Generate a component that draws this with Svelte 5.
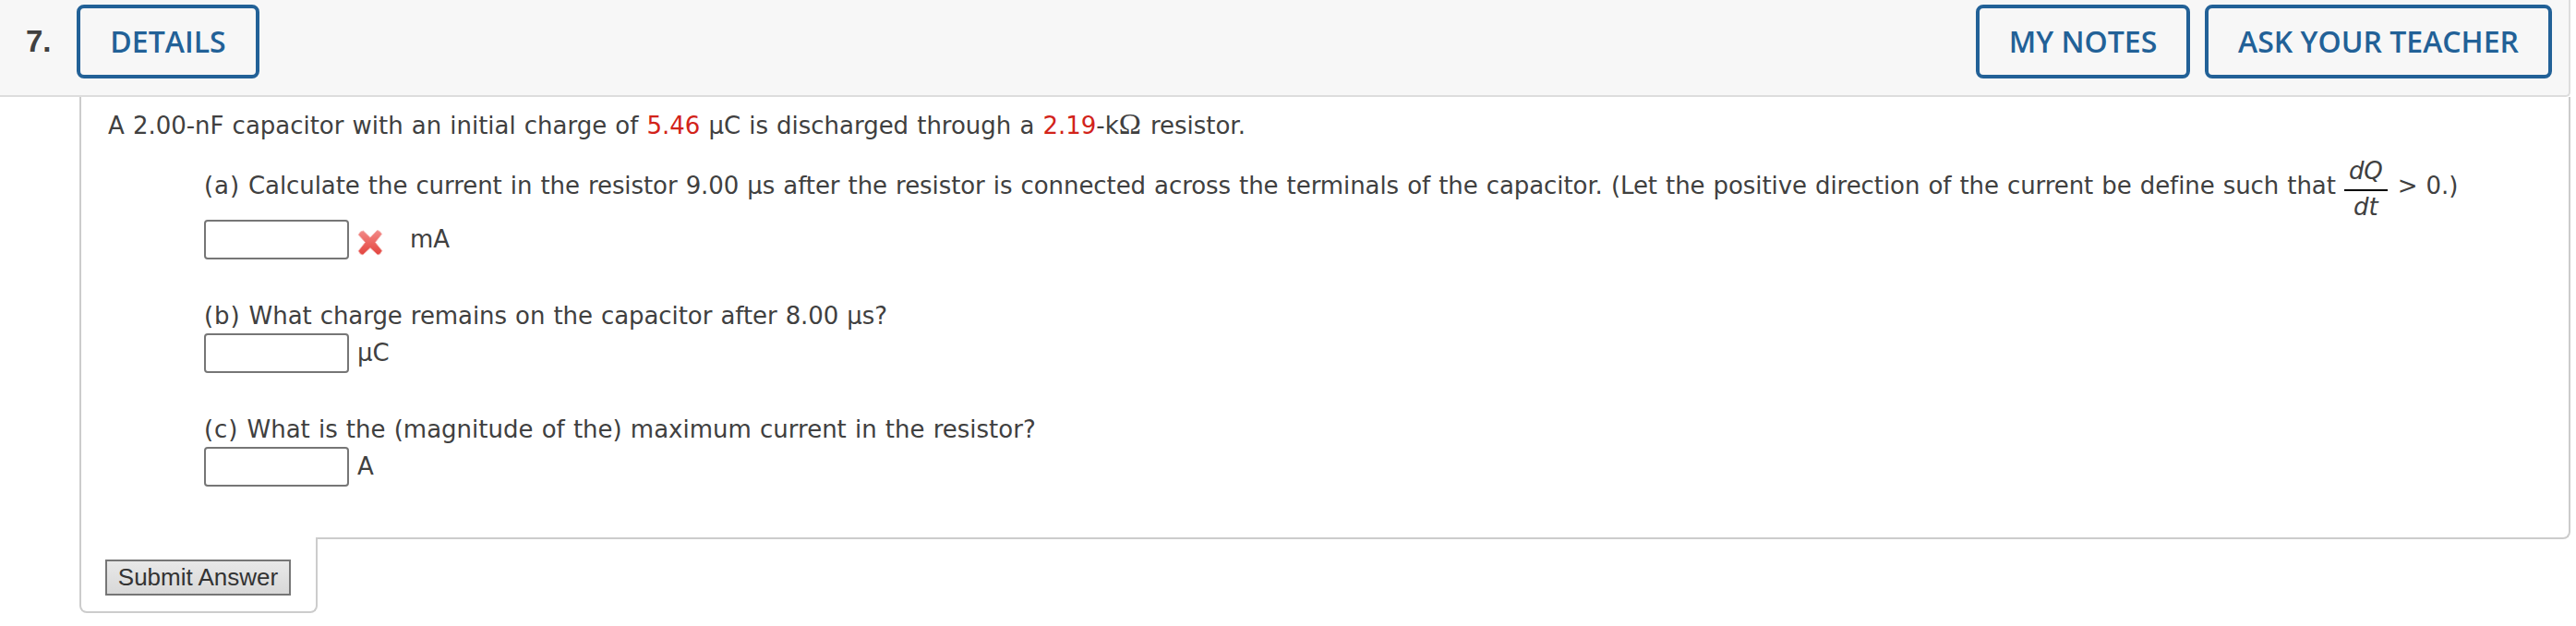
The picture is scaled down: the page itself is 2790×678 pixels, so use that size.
<script>
	let answers = { a: '', b: '', c: '' };
</script>

<div class="question">
	<header>
		<span class="number">7.</span>
		<button class="action">DETAILS</button>
		<div class="right">
			<button class="action notes">MY NOTES</button>
			<button class="action ask">ASK YOUR TEACHER</button>
		</div>
	</header>

	<main>
		<p class="intro">
			A 2.00-nF capacitor with an initial charge of <span class="rand">5.46</span> µC is discharged through a <span class="rand">2.19</span>-k<span class="ohm">Ω</span> resistor.
		</p>

		<div class="part part-a">
			<div class="prompt">
				<span><span class="label">(a)</span> Calculate the current in the resistor 9.00 µs after the resistor is connected across the terminals of the capacitor. (Let the positive direction of the current be define such that</span>
				<span class="frac"><i class="num">dQ</i><i class="den">dt</i></span>
				<span>&gt; 0.)</span>
			</div>
			<div class="answer">
				<input type="text" aria-label="current" bind:value={answers.a} />
				<svg class="wrong" viewBox="0 0 28 30" width="28" height="30">
					<defs>
						<linearGradient id="red" x1="0" y1="0" x2="0" y2="1">
							<stop offset="0" stop-color="#f28a88" />
							<stop offset="0.5" stop-color="#ec6661" />
							<stop offset="1" stop-color="#e2443f" />
						</linearGradient>
					</defs>
					<path
						d="M6.5 2 L14 9.2 L21.5 1.5 Q24 1.3 26.6 5.5 L19.5 14.5 L26.8 23.5 Q25 28 22 28 L14 20.5 L6 28 Q3 28 1.2 23.7 L8.5 14.5 L1.2 6.3 Q3 2 6.5 2 Z"
						fill="url(#red)"
						stroke="#f5b5b3"
						stroke-width="0.8"
						stroke-linejoin="round"
					/>
				</svg>
				<span class="unit">mA</span>
			</div>
		</div>

		<div class="part part-b">
			<div class="prompt"><span><span class="label">(b)</span> What charge remains on the capacitor after 8.00 µs?</span></div>
			<div class="answer">
				<input type="text" aria-label="charge" bind:value={answers.b} />
				<span class="unit">µC</span>
			</div>
		</div>

		<div class="part part-c">
			<div class="prompt"><span><span class="label">(c)</span> What is the (magnitude of the) maximum current in the resistor?</span></div>
			<div class="answer">
				<input type="text" aria-label="maximum current" bind:value={answers.c} />
				<span class="unit">A</span>
			</div>
		</div>
	</main>

	<footer>
		<button class="submit">Submit Answer</button>
	</footer>
</div>

<style>
	:global(body) {
		background: #fff;
	}
	.question {
		width: 2784px;
		height: 678px;
		color: #404040;
		font-family: 'DejaVu Sans', Verdana, sans-serif;
		font-size: 26px;
		word-spacing: 0.9px;
	}
	header {
		display: flex;
		align-items: flex-start;
		height: 105px;
		padding: 5px 18px 0 28px;
		box-sizing: border-box;
		background: #f7f7f7;
		border-bottom: 2px solid #ddd;
		border-right: 2px solid #ddd;
		border-bottom-right-radius: 5px;
	}
	.number {
		width: 55px;
		font: bold 33px/80px 'Liberation Sans', Arial, sans-serif;
	}
	.right {
		display: flex;
		gap: 16px;
		margin-left: auto;
	}
	.action {
		width: 198px;
		height: 80px;
		padding: 0;
		box-sizing: border-box;
		border: 4px solid #226197;
		border-radius: 8px;
		background: #f7f7f7;
		color: #226197;
		font: 600 32px/72px 'Open Sans', sans-serif;
		white-space: nowrap;
	}
	.notes {
		width: 232px;
	}
	.ask {
		width: 376px;
	}
	main {
		height: 479px;
		margin-left: 86px;
		padding: 13px 0 0 29px;
		box-sizing: border-box;
		border: 2px solid #ccc;
		border-top: 0;
		border-bottom-right-radius: 8px;
	}
	.intro {
		height: 36px;
		margin: 0;
		line-height: 36px;
		letter-spacing: -0.02px;
		white-space: nowrap;
	}
	.rand {
		color: #d2231a;
	}
	.ohm {
		margin-right: 1px;
		font-family: 'Liberation Serif', serif;
		font-size: 32.5px;
		line-height: 1;
	}
	.part {
		margin-left: 104px;
	}
	.part-b,
	.part-c {
		margin-top: 43px;
	}
	.prompt {
		display: flex;
		align-items: flex-start;
		height: 37px;
		line-height: 36px;
		white-space: nowrap;
	}
	.part-a .prompt {
		height: 55px;
		padding-top: 29px;
		letter-spacing: -0.075px;
	}
	.part-b .prompt {
		letter-spacing: -0.07px;
	}
	.part-c .prompt {
		letter-spacing: 0;
	}
	.prompt .label {
		letter-spacing: 0.9px;
	}
	.frac {
		display: flex;
		flex-direction: column;
		width: 47px;
		margin: -14px 11px 0 9px;
		text-align: center;
		line-height: 32px;
	}
	.num {
		padding-bottom: 4px;
		border-bottom: 2px solid #000;
	}
	.den {
		margin-top: 1px;
	}
	.answer {
		display: flex;
		height: 43px;
	}
	input {
		width: 157px;
		height: 43px;
		padding: 0 6px;
		box-sizing: border-box;
		border: 2px solid #767676;
		border-radius: 4px;
		background: #fff;
		font: inherit;
	}
	.wrong {
		margin: 10px 0 0 9px;
	}
	.unit {
		margin-left: 9px;
		line-height: 42px;
	}
	.part-a .unit {
		margin-left: 29px;
	}
	/* overlaps the bottom border of main so the two boxes join up */
	footer {
		width: 258px;
		height: 82px;
		margin: -2px 0 0 86px;
		padding: 24px 0 0 26px;
		box-sizing: border-box;
		position: relative;
		background: #fff;
		border: 2px solid #ccc;
		border-top: 0;
		border-radius: 0 0 8px 8px;
	}
	.submit {
		display: block;
		width: 201px;
		height: 39px;
		padding: 0;
		box-sizing: border-box;
		border: 2px solid #767676;
		border-radius: 0;
		background: linear-gradient(#e8e8e8, #d8d8d8);
		color: #333;
		font: 26px/33px 'Liberation Sans', Arial, sans-serif;
		word-spacing: 0;
		white-space: nowrap;
	}
</style>
